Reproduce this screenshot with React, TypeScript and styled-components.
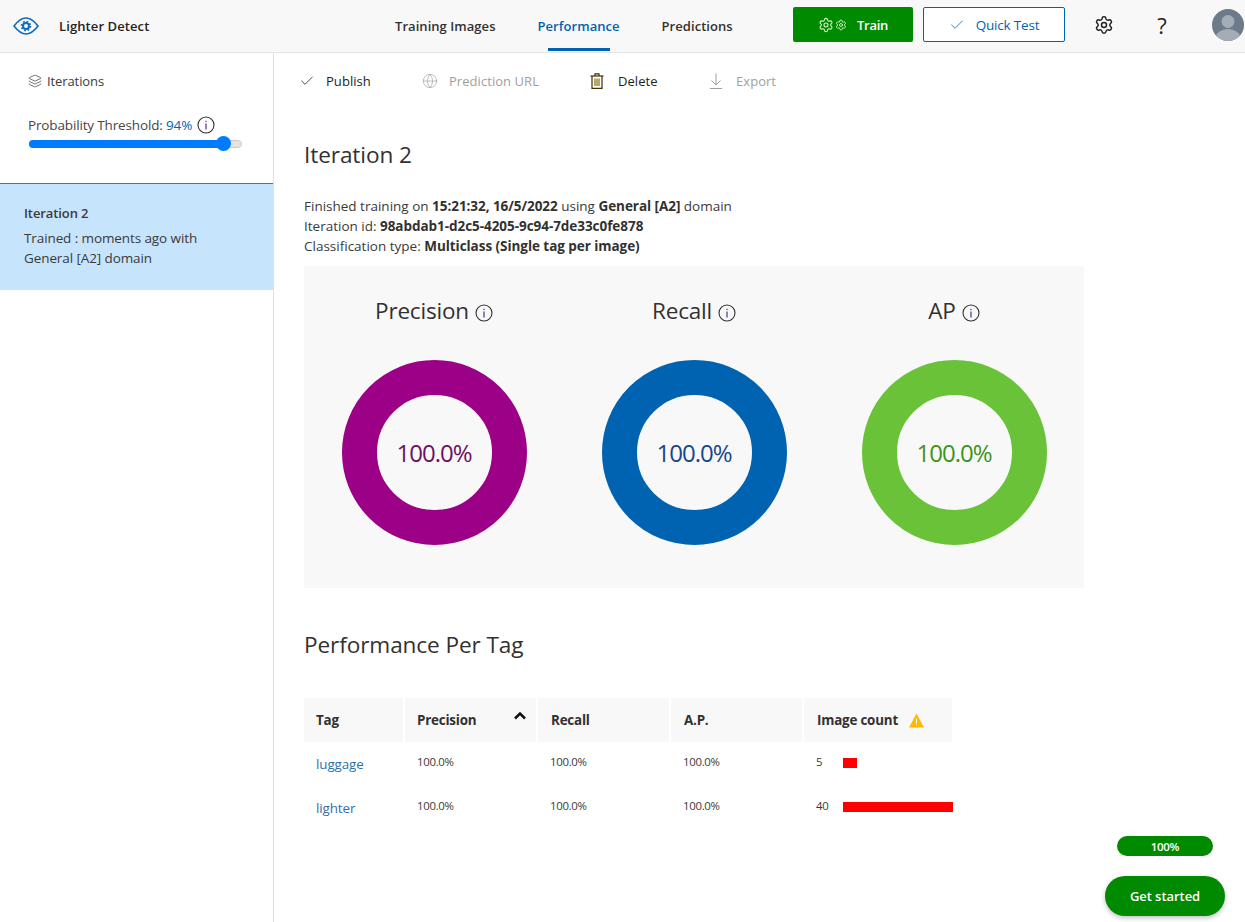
import styled, { createGlobalStyle } from "styled-components";
import { Check, Globe, Settings, Layers } from "lucide-react";

const GlobalStyle = createGlobalStyle`
    html, body {
        margin: 0;
        padding: 0;
        background: #fff;
        font-family: "Open Sans", "Noto Sans", "Liberation Sans", sans-serif;
        color: #323130;
    }
`;

const Page = styled.div`
    width: 1245px;
    height: 922px;
    display: flex;
    flex-direction: column;
    overflow: hidden;
    position: relative;
`;

const Header = styled.header`
    height: 53px;
    box-sizing: border-box;
    flex: none;
    display: flex;
    align-items: center;
    background: #f8f8f8;
    border-bottom: 1px solid #e6e6e6;
`;

const Brand = styled.div`
    width: 395px;
    flex: none;
    display: flex;
    align-items: center;
    padding-left: 13px;
    box-sizing: border-box;
    font-size: 13px;
    font-weight: 600;
    letter-spacing: 0.1px;
    color: #252423;
    gap: 20px;
`;

const Tabs = styled.nav`
    display: flex;
    height: 52px;
    width: 398px;
    flex: none;
    gap: 42px;
`;

const TabLink = styled.div<{ $active?: boolean }>`
    position: relative;
    height: 52px;
    box-sizing: border-box;
    padding-top: 17px;
    font-size: 13px;
    font-weight: 600;
    letter-spacing: 0.05px;
    white-space: nowrap;
    color: ${(p) => (p.$active ? "#0063b1" : "#323130")};
    &::after {
        content: "";
        display: ${(p) => (p.$active ? "block" : "none")};
        position: absolute;
        left: 10px;
        right: 10px;
        bottom: 1px;
        height: 3px;
        background: #0063b1;
    }
`;

const TrainButton = styled.button`
    width: 120px;
    height: 35px;
    flex: none;
    margin-bottom: 3px;
    display: flex;
    align-items: center;
    justify-content: center;
    gap: 10px;
    background: #008a00;
    color: #fff;
    border: 0;
    border-radius: 2px;
    font: 600 13px "Open Sans", sans-serif;
    letter-spacing: -0.3px;
`;

const GearPair = styled.span`
    display: flex;
    align-items: center;
    gap: 1px;
    color: #d8f5c8;
`;

const QuickTestButton = styled.button`
    width: 142px;
    height: 35px;
    flex: none;
    margin: 0 10px 3px 10px;
    display: flex;
    align-items: center;
    justify-content: center;
    gap: 11px;
    background: #fff;
    color: #0063b1;
    border: 1px solid #0063b1;
    border-radius: 2px;
    font: 400 13.5px "Open Sans", sans-serif;
    letter-spacing: -0.2px;
`;

const HeaderIcon = styled.div`
    width: 58px;
    flex: none;
    display: flex;
    justify-content: center;
    margin-bottom: 3px;
    color: #252423;
`;

const HelpMark = styled.span`
    font-size: 22px;
    line-height: 24px;
    color: #252423;
`;

const AvatarCircle = styled.div`
    margin: 0 0 3px 21px;
    width: 32px;
    height: 32px;
    flex: none;
    border-radius: 50%;
    overflow: hidden;
`;

const Body = styled.div`
    flex: 1;
    display: flex;
    min-height: 0;
`;

const Sidebar = styled.aside`
    width: 274px;
    flex: none;
    box-sizing: border-box;
    border-right: 1px solid #e1e1e1;
`;

const SideTop = styled.div`
    height: 131px;
    box-sizing: border-box;
    padding: 18px 0 0 28px;
    border-bottom: 1px solid #6b6b6b;
`;

const IterationsLabel = styled.div`
    display: flex;
    align-items: center;
    gap: 5px;
    height: 20px;
    font-size: 13px;
    letter-spacing: -0.1px;
    color: #3b3a39;
`;

const ThresholdRow = styled.div`
    margin-top: 24px;
    display: flex;
    align-items: center;
    height: 20px;
    font-size: 13.5px;
    letter-spacing: -0.15px;
    color: #484644;
    gap: 5px;
    span b {
        font-weight: 400;
        color: #0063b1;
    }
`;

const Slider = styled.div`
    position: relative;
    margin: 5px 0 0 1px;
    width: 213px;
    height: 8px;
    border-radius: 4px;
    background: #e4e4e4;
    border: 1px solid #ccc;
    box-sizing: border-box;
`;

const SliderFill = styled.div`
    position: absolute;
    left: -1px;
    top: -1px;
    height: 8px;
    border-radius: 4px;
    background: #007bff;
`;

const SliderThumb = styled.div`
    position: absolute;
    top: -5px;
    width: 15px;
    height: 15px;
    border-radius: 50%;
    background: #007bff;
`;

const IterationItem = styled.div`
    height: 106px;
    box-sizing: border-box;
    padding: 19px 24px;
    background: #c7e4fd;
    font-size: 13.5px;
    line-height: 20px;
    letter-spacing: -0.1px;
    color: #3b3a39;
    strong {
        font-size: 13px;
        font-weight: 600;
        display: block;
        margin-bottom: 5px;
    }
`;

const Main = styled.main`
    flex: 1;
    min-width: 0;
    padding: 0 0 0 30px;
`;

const Toolbar = styled.div`
    height: 56px;
    display: flex;
    align-items: center;
    margin-left: -5px;
`;

const ToolItem = styled.div<{ $disabled?: boolean; $width: number; $gap: number }>`
    width: ${(p) => p.$width}px;
    flex: none;
    display: flex;
    align-items: center;
    gap: ${(p) => p.$gap}px;
    font-size: 13px;
    letter-spacing: 0.05px;
    white-space: nowrap;
    color: ${(p) => (p.$disabled ? "#a19f9d" : "#201f1e")};
`;

const Title = styled.h1`
    margin: 30px 0 0;
    font-size: 22.6px;
    line-height: 32px;
    font-weight: 400;
    letter-spacing: -0.1px;
    color: #323130;
`;

const Details = styled.div`
    margin-top: 25px;
    font-size: 13.5px;
    line-height: 20px;
    letter-spacing: 0;
    color: #3b3a39;
    b {
        font-weight: 700;
        letter-spacing: -0.05px;
        color: #323130;
    }
`;

const MetricsPanel = styled.section`
    margin-top: 10px;
    width: 780px;
    height: 322px;
    background: #f8f8f8;
    display: grid;
    grid-template-columns: repeat(3, 260px);
`;

const Metric = styled.div`
    display: flex;
    flex-direction: column;
    align-items: center;
    padding-top: 27px;
`;

const MetricName = styled.div`
    display: flex;
    align-items: center;
    gap: 6px;
    height: 34px;
    font-size: 22.5px;
    letter-spacing: -0.2px;
    color: #323130;
    svg {
        margin-top: 6px;
    }
`;

const Donut = styled.div<{ $color: string }>`
    margin-top: 33px;
    width: 185px;
    height: 185px;
    box-sizing: border-box;
    border-radius: 50%;
    border: 35px solid ${(p) => p.$color};
    display: flex;
    align-items: center;
    justify-content: center;
`;

const DonutValue = styled.div<{ $color: string }>`
    font-size: 24px;
    font-weight: 500;
    letter-spacing: -1px;
    color: ${(p) => p.$color};
`;

const SectionTitle = styled.h2`
    margin: 41px 0 0;
    font-size: 22.6px;
    line-height: 32px;
    font-weight: 400;
    letter-spacing: -0.1px;
    color: #323130;
`;

const TagTable = styled.div`
    margin-top: 37px;
    width: 660px;
`;

const TableHead = styled.div`
    display: grid;
    grid-template-columns: 99px 131px 131px 131px 148px;
    column-gap: 2px;
`;

const HeadCell = styled.div`
    position: relative;
    height: 44px;
    display: flex;
    align-items: center;
    gap: 11px;
    padding-left: 13px;
    background: #f8f8f8;
    font-size: 13.4px;
    font-weight: 700;
    letter-spacing: -0.2px;
    color: #323130;
    &:first-child,
    &:nth-child(2) {
        padding-left: 12px;
    }
`;

const SortArrow = styled.svg`
    position: absolute;
    right: 9px;
    top: 13px;
`;

const TableRow = styled.div`
    display: grid;
    grid-template-columns: 99px 131px 131px 131px 148px;
    column-gap: 2px;
    height: 44px;
    align-items: center;
`;

const TagLink = styled.a`
    padding: 0 0 0 12px;
    font-size: 13.4px;
    letter-spacing: -0.1px;
    color: #2f6fa8;
`;

const ValueCell = styled.div`
    padding: 0 0 6px 12px;
    font-size: 11.4px;
    letter-spacing: -0.3px;
    color: #3b3a39;
`;

const CountCell = styled.div`
    display: flex;
    align-items: center;
    padding: 0 0 2px 12px;
    font-size: 11.4px;
    letter-spacing: -0.2px;
    color: #3b3a39;
`;

const CountValue = styled.span`
    width: 27px;
    flex: none;
    margin-bottom: 4px;
`;

const CountBar = styled.div`
    height: 10px;
    background: #ff0000;
    flex: none;
`;

const ProgressPill = styled.div`
    position: absolute;
    left: 1117px;
    top: 836px;
    width: 96px;
    height: 20px;
    border-radius: 10px;
    background: #008a00;
    color: #fff;
    font-size: 11.5px;
    font-weight: 600;
    letter-spacing: -0.3px;
    display: flex;
    align-items: center;
    justify-content: center;
`;

const GetStarted = styled.button`
    position: absolute;
    left: 1105px;
    top: 876px;
    width: 120px;
    height: 40px;
    border: 0;
    border-radius: 20px;
    background: #008a00;
    color: #fff;
    font: 600 13px "Open Sans", sans-serif;
    letter-spacing: -0.05px;
    box-shadow: 0 2px 5px rgba(0, 0, 0, 0.25);
`;

function EyeLogo() {
    return (
        <svg width="26" height="18" viewBox="0 0 26 18" fill="none" stroke="#0f6cbd" strokeWidth="1.6">
            <path d="M1 9 C6 2.5 9.5 1 13 1 C16.5 1 20 2.5 25 9 C20 15.5 16.5 17 13 17 C9.5 17 6 15.5 1 9 Z" />
            <circle cx="13" cy="9" r="3" strokeWidth="2" />
            <circle cx="13" cy="9" r="4.6" strokeWidth="1.5" strokeDasharray="1.8 1.8" />
        </svg>
    );
}

function InfoIcon({ size = 18 }: { size?: number }) {
    return (
        <svg width={size} height={size} viewBox="0 0 18 18" fill="none">
            <circle cx="9" cy="9" r="8" stroke="#323130" strokeWidth="1.1" />
            <rect x="8.4" y="7.5" width="1.2" height="6" fill="#5c2d91" />
            <rect x="8.4" y="4.8" width="1.2" height="1.3" fill="#5c2d91" />
        </svg>
    );
}

function WarningIcon() {
    return (
        <svg width="15" height="15" viewBox="0 0 15 15">
            <path d="M7.5 0.5 L15 14.5 L0 14.5 Z" fill="#ffb900" />
            <rect x="7" y="5.5" width="1" height="5" fill="#fff" />
            <rect x="7" y="11.5" width="1" height="1" fill="#fff" />
        </svg>
    );
}

function TrashIcon() {
    return (
        <svg width="14" height="16" viewBox="0 0 14 16" fill="none" stroke="#3d3000" strokeWidth="1.2">
            <path d="M0.5 3 H13.5" />
            <path d="M5 3 V0.8 H9 V3" />
            <path d="M2 3 V15.4 H12 V3" />
            <path d="M5 5.5 V13 M7 5.5 V13 M9 5.5 V13" stroke="#8a6a00" />
        </svg>
    );
}

function ExportIcon() {
    return (
        <svg width="14" height="16" viewBox="0 0 14 16" fill="none" stroke="#a19f9d" strokeWidth="1">
            <path d="M7 0.5 V12" />
            <path d="M2.5 7.5 L7 12 L11.5 7.5" />
            <path d="M1 15.5 H13" />
        </svg>
    );
}

const metrics = [
    { name: "Precision", color: "#9b0086", text: "#6e0f66" },
    { name: "Recall", color: "#0063b1", text: "#17478a" },
    { name: "AP", color: "#69c238", text: "#3f9420" },
];

const tags = [
    { name: "luggage", count: 5, bar: 14 },
    { name: "lighter", count: 40, bar: 110 },
];

function Avatar() {
    return (
        <AvatarCircle>
            <svg width="32" height="32" viewBox="0 0 32 32">
                <rect width="32" height="32" fill="#6d7a89" />
                <circle cx="16" cy="12.5" r="6.5" fill="#a4adb6" />
                <ellipse cx="16" cy="29" rx="12.5" ry="9" fill="#a4adb6" />
            </svg>
        </AvatarCircle>
    );
}

export default function App() {
    return (
        <Page>
            <GlobalStyle />
            <Header>
                <Brand>
                    <EyeLogo />
                    Lighter Detect
                </Brand>
                <Tabs>
                    <TabLink>Training Images</TabLink>
                    <TabLink $active>Performance</TabLink>
                    <TabLink>Predictions</TabLink>
                </Tabs>
                <TrainButton>
                    <GearPair>
                        <Settings size={16} strokeWidth={1.6} />
                        <Settings size={12} strokeWidth={1.8} />
                    </GearPair>
                    Train
                </TrainButton>
                <QuickTestButton>
                    <Check size={16} strokeWidth={1.2} />
                    Quick Test
                </QuickTestButton>
                <HeaderIcon>
                    <Settings size={20} strokeWidth={1.8} />
                </HeaderIcon>
                <HeaderIcon>
                    <HelpMark>?</HelpMark>
                </HeaderIcon>
                <Avatar />
            </Header>
            <Body>
                <Sidebar>
                    <SideTop>
                        <IterationsLabel>
                            <Layers size={14} strokeWidth={1.2} />
                            Iterations
                        </IterationsLabel>
                        <ThresholdRow>
                            <span>
                                Probability Threshold: <b>94%</b>
                            </span>
                            <InfoIcon />
                        </ThresholdRow>
                        <Slider>
                            <SliderFill style={{ width: 199 }} />
                            <SliderThumb style={{ left: 186 }} />
                        </Slider>
                    </SideTop>
                    <IterationItem>
                        <strong>Iteration 2</strong>
                        Trained : moments ago with
                        <br />
                        General [A2] domain
                    </IterationItem>
                </Sidebar>
                <Main>
                    <Toolbar>
                        <ToolItem $width={123} $gap={11}>
                            <Check size={16} strokeWidth={1.2} />
                            Publish
                        </ToolItem>
                        <ToolItem $disabled $width={168} $gap={11}>
                            <Globe size={16} strokeWidth={1} />
                            Prediction URL
                        </ToolItem>
                        <ToolItem $width={119} $gap={14}>
                            <TrashIcon />
                            Delete
                        </ToolItem>
                        <ToolItem $disabled $width={100} $gap={13}>
                            <ExportIcon />
                            Export
                        </ToolItem>
                    </Toolbar>
                    <Title>Iteration 2</Title>
                    <Details>
                        Finished training on <b>15:21:32, 16/5/2022</b> using <b>General [A2]</b> domain
                        <br />
                        Iteration id: <b>98abdab1-d2c5-4205-9c94-7de33c0fe878</b>
                        <br />
                        Classification type: <b>Multiclass (Single tag per image)</b>
                    </Details>
                    <MetricsPanel>
                        {metrics.map((m) => (
                            <Metric key={m.name}>
                                <MetricName>
                                    {m.name}
                                    <InfoIcon />
                                </MetricName>
                                <Donut $color={m.color}>
                                    <DonutValue $color={m.text}>100.0%</DonutValue>
                                </Donut>
                            </Metric>
                        ))}
                    </MetricsPanel>
                    <SectionTitle>Performance Per Tag</SectionTitle>
                    <TagTable>
                        <TableHead>
                            <HeadCell>Tag</HeadCell>
                            <HeadCell>
                                Precision
                                <SortArrow width="14" height="9" viewBox="0 0 14 9" fill="none" stroke="#111" strokeWidth="2.5">
                                    <path d="M2 7.5 L7 2.5 L12 7.5" />
                                </SortArrow>
                            </HeadCell>
                            <HeadCell>Recall</HeadCell>
                            <HeadCell>A.P.</HeadCell>
                            <HeadCell>
                                Image count
                                <WarningIcon />
                            </HeadCell>
                        </TableHead>
                        {tags.map((t) => (
                            <TableRow key={t.name}>
                                <TagLink>{t.name}</TagLink>
                                <ValueCell>100.0%</ValueCell>
                                <ValueCell>100.0%</ValueCell>
                                <ValueCell>100.0%</ValueCell>
                                <CountCell>
                                    <CountValue>{t.count}</CountValue>
                                    <CountBar style={{ width: t.bar }} />
                                </CountCell>
                            </TableRow>
                        ))}
                    </TagTable>
                </Main>
            </Body>
            <ProgressPill>100%</ProgressPill>
            <GetStarted>Get started</GetStarted>
        </Page>
    );
}
